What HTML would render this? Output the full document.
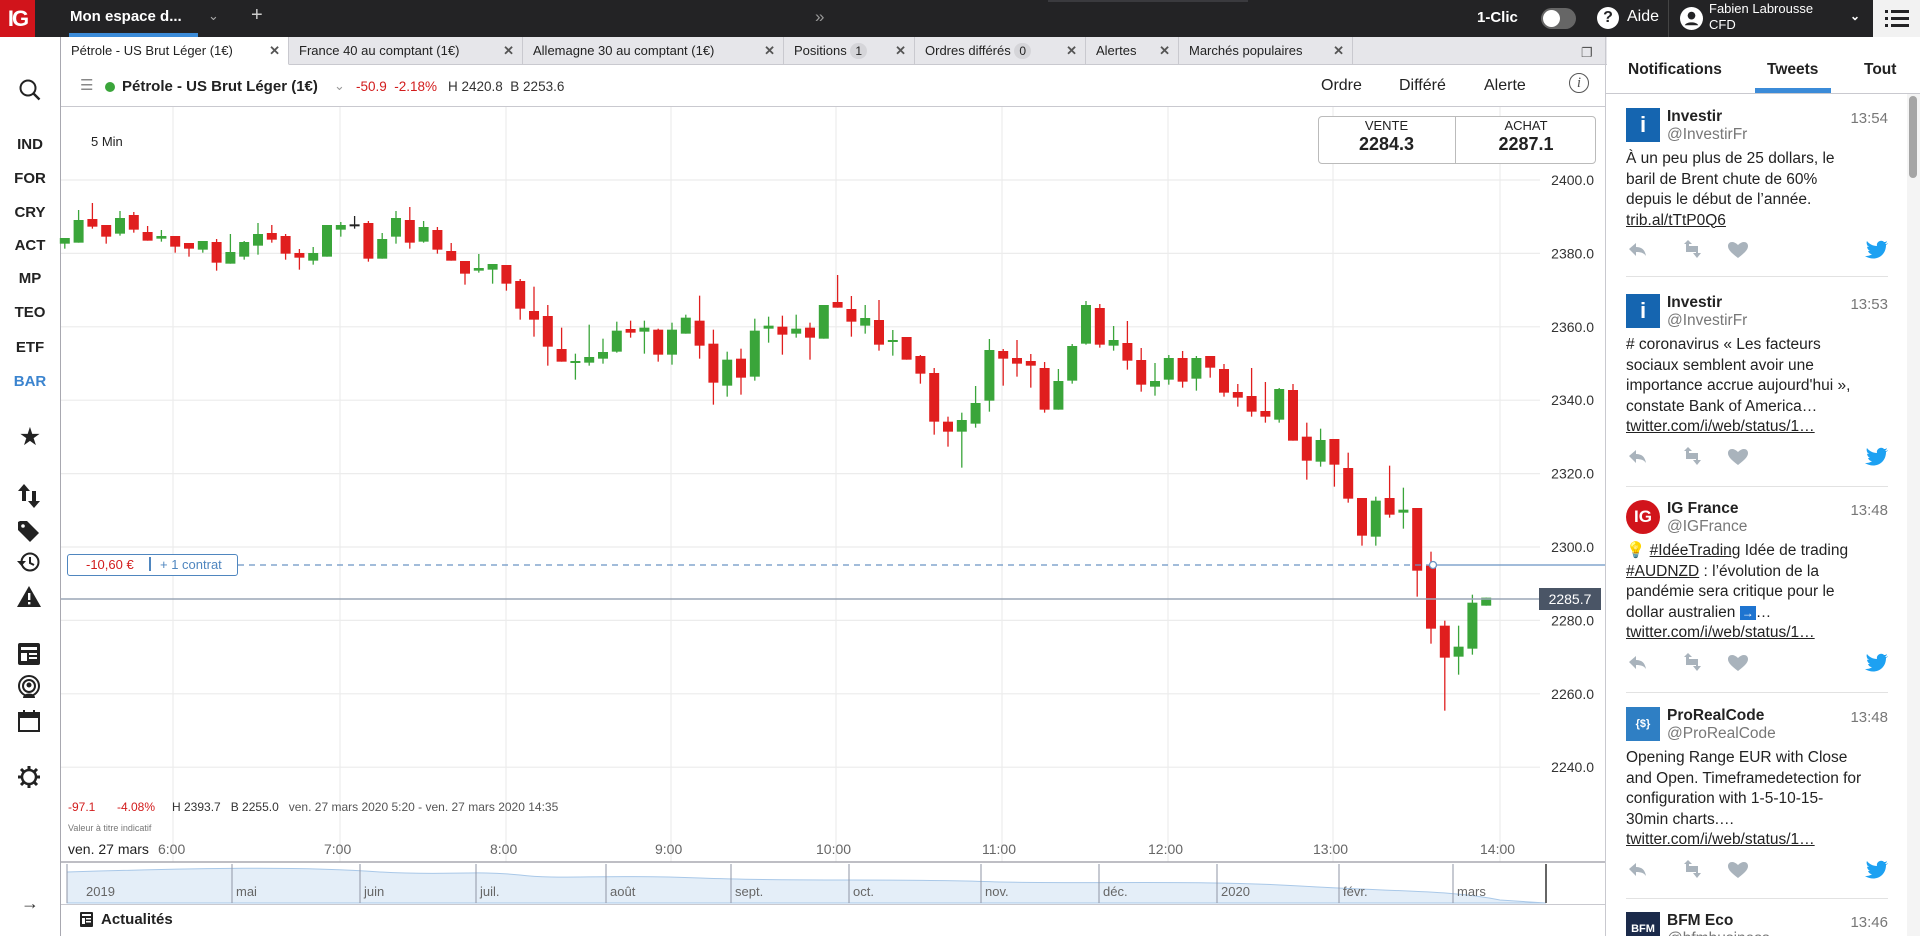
<!DOCTYPE html>
<html style="width:1920px;height:936px;overflow:hidden"><head><meta charset="utf-8">
<style>
*{box-sizing:border-box;margin:0;padding:0}
body{width:1920px;height:936px;overflow:hidden;background:#fff;font-family:"Liberation Sans",sans-serif;color:#222;position:relative}
.a{position:absolute;white-space:nowrap}
#top{left:0;top:0;width:1920px;height:37px;background:#232325}
.side{left:0;width:60px;text-align:center;font-weight:bold;font-size:15px;color:#222}
.tab{top:37px;height:28px;border-right:1px solid #c9c9cf;font-size:13px;line-height:28px;padding-left:10px;color:#222}
.tab .x{position:absolute;right:8px;top:0;font-weight:bold;color:#555}
.badge{display:inline-block;background:#d5d5d9;border-radius:9px;padding:0 5px;line-height:16px;font-size:12px}
.tw{left:20px;width:262px}
.tw .av{position:absolute;left:0;top:0;width:34px;height:34px}
.tw .nm{position:absolute;left:41px;top:0;font-weight:bold;font-size:15.5px}
.tw .hd{position:absolute;left:41px;top:18px;font-size:15.5px;color:#777}
.tw .tm{position:absolute;right:0;top:2px;font-size:15px;color:#777}
.tw .tx{position:absolute;left:0;top:41px;font-size:15.5px;line-height:20.5px;white-space:nowrap;color:#222}
.tw .tx u{text-decoration:underline}
.sep{left:20px;width:262px;height:1px;background:#e2e2e2}
.tl{font-size:14px;color:#666;top:841px}
.ml{font-size:13px;color:#666;top:884px}
</style></head><body>
<div id="top" class="a"></div>
<div class="a" style="left:0;top:0;width:35px;height:37px;background:#d1141b;color:#fff;font-weight:bold;font-size:22px;line-height:37px;text-align:center;letter-spacing:-2px">IG</div>
<div class="a" style="left:70px;top:8px;color:#fff;font-weight:bold;font-size:15px">Mon espace d...</div>
<div class="a" style="left:208px;top:8px;color:#aaa;font-size:13px">&#8964;</div>
<div class="a" style="left:251px;top:4px;color:#ccc;font-size:20px">+</div>
<div class="a" style="left:69px;top:33px;width:129px;height:4px;background:#3b8bd8"></div>
<div class="a" style="left:815px;top:7px;color:#999;font-size:17px">»</div>
<div class="a" style="left:1048px;top:0;width:200px;height:2px;background:#3a3a3e"></div>
<div class="a" style="left:1477px;top:9px;color:#fff;font-weight:bold;font-size:15px">1-Clic</div>
<div class="a" style="left:1541px;top:8px;width:35px;height:21px;border-radius:11px;background:#666"><div style="position:absolute;left:2px;top:2px;width:17px;height:17px;border-radius:50%;background:#fff"></div></div>
<div class="a" style="left:1597px;top:7px;width:22px;height:22px;border-radius:50%;background:#fff;color:#232325;font-weight:bold;font-size:16px;text-align:center;line-height:22px">?</div>
<div class="a" style="left:1627px;top:8px;color:#fff;font-size:16px">Aide</div>
<div class="a" style="left:1668px;top:0;width:1px;height:37px;background:#444"></div>
<svg class="a" style="left:1680px;top:7px" width="23" height="23" viewBox="0 0 24 24"><circle cx="12" cy="12" r="12" fill="#fff"/><circle cx="12" cy="9" r="4" fill="#232325"/><path d="M5 19c1.5-4 12.5-4 14 0" fill="#232325"/></svg>
<div class="a" style="left:1709px;top:1px;color:#fff;font-size:13px;line-height:16px">Fabien Labrousse<br>CFD</div>
<div class="a" style="left:1850px;top:9px;color:#fff;font-size:12px;font-weight:bold">&#8964;</div>
<div class="a" style="left:1873px;top:0;width:47px;height:37px;background:#f2f2f2"></div>
<svg class="a" style="left:1885px;top:9px" width="24" height="19"><g fill="#232325"><rect x="0" y="1" width="3" height="3"/><rect x="6" y="1" width="18" height="3"/><rect x="0" y="8" width="3" height="3"/><rect x="6" y="8" width="18" height="3"/><rect x="0" y="15" width="3" height="3"/><rect x="6" y="15" width="18" height="3"/></g></svg>

<div class="a" style="left:60px;top:37px;width:1px;height:899px;background:#a8a8b0"></div>
<svg class="a" style="left:18px;top:78px" width="24" height="24"><circle cx="10" cy="10" r="7.5" fill="none" stroke="#222" stroke-width="2"/><path d="M15.5 15.5l6 6" stroke="#222" stroke-width="2.4"/></svg>
<div class="a side" style="top:136px">IND</div>
<div class="a side" style="top:170px">FOR</div>
<div class="a side" style="top:204px">CRY</div>
<div class="a side" style="top:237px">ACT</div>
<div class="a side" style="top:270px">MP</div>
<div class="a side" style="top:304px">TEO</div>
<div class="a side" style="top:339px">ETF</div>
<div class="a side" style="top:373px;color:#3b84cf">BAR</div>
<div class="a" style="left:0;width:60px;top:422px;text-align:center;font-size:25px">★</div>
<svg class="a" style="left:18px;top:484px" width="22" height="24"><path d="M6 0l6 7H8v10H4V7H0z M16 24l-6-7h4V7h4v10h4z" fill="#222"/></svg>
<svg class="a" style="left:18px;top:520px" width="22" height="22"><path d="M0 2v8l12 12 9-9L9 1H2z" fill="#222"/><circle cx="5" cy="6" r="1.8" fill="#fff"/></svg>
<svg class="a" style="left:17px;top:551px" width="24" height="22"><circle cx="13" cy="11" r="8.5" fill="none" stroke="#222" stroke-width="2"/><path d="M13 6v6l4 2" stroke="#222" stroke-width="2" fill="none"/><path d="M0 10l4.5 5 4.5-5z" fill="#222"/></svg>
<svg class="a" style="left:17px;top:586px" width="24" height="21"><path d="M12 0l12 21H0z" fill="#222"/><rect x="11" y="7" width="2.4" height="7" fill="#fff"/><rect x="11" y="16" width="2.4" height="2.4" fill="#fff"/></svg>
<svg class="a" style="left:18px;top:643px" width="22" height="22"><rect x="0" y="0" width="22" height="22" rx="2" fill="#222"/><rect x="3" y="4" width="16" height="3" fill="#fff"/><rect x="3" y="10" width="6" height="8" fill="#fff"/><rect x="11" y="10" width="8" height="2" fill="#fff"/><rect x="11" y="14" width="8" height="2" fill="#fff"/></svg>
<svg class="a" style="left:17px;top:675px" width="24" height="24"><circle cx="12" cy="11" r="10" fill="none" stroke="#222" stroke-width="2"/><circle cx="12" cy="11" r="6" fill="none" stroke="#222" stroke-width="2"/><circle cx="12" cy="10" r="2.5" fill="#222"/><path d="M6 23c0-6 12-6 12 0z" fill="#222"/></svg>
<svg class="a" style="left:18px;top:710px" width="22" height="22"><rect x="1" y="3" width="20" height="18" fill="none" stroke="#222" stroke-width="2"/><rect x="1" y="3" width="20" height="5" fill="#222"/><rect x="5" y="0" width="2" height="5" fill="#222"/><rect x="15" y="0" width="2" height="5" fill="#222"/></svg>
<svg class="a" style="left:17px;top:765px" width="24" height="24"><circle cx="12" cy="12" r="7" fill="none" stroke="#222" stroke-width="2.5"/><g stroke="#222" stroke-width="3"><path d="M12 1v4M12 19v4M1 12h4M19 12h4M4 4l3 3M17 17l3 3M4 20l3-3M17 7l3-3"/></g><circle cx="12" cy="12" r="4.5" fill="#fff"/></svg>
<div class="a" style="left:0;width:60px;top:893px;text-align:center;font-size:18px;color:#333">&#8594;</div>

<div class="a" style="left:61px;top:37px;width:1546px;height:28px;background:#e6e6ea;border-bottom:1px solid #c9c9cf"></div>
<div class="a tab" style="left:61px;width:228px;background:#fff;border-bottom:1px solid #fff">Pétrole - US Brut Léger (1€)<span class="x">✕</span></div>
<div class="a tab" style="left:289px;width:234px">France 40 au comptant (1€)<span class="x">✕</span></div>
<div class="a tab" style="left:523px;width:261px">Allemagne 30 au comptant (1€)<span class="x">✕</span></div>
<div class="a tab" style="left:784px;width:131px">Positions <span class="badge">1</span><span class="x">✕</span></div>
<div class="a tab" style="left:915px;width:171px">Ordres différés <span class="badge">0</span><span class="x">✕</span></div>
<div class="a tab" style="left:1086px;width:93px">Alertes<span class="x">✕</span></div>
<div class="a tab" style="left:1179px;width:174px">Marchés populaires<span class="x">✕</span></div>
<div class="a" style="left:1581px;top:45px;font-size:13px;color:#555">❐</div>
<div class="a" style="left:1605px;top:37px;width:1px;height:899px;background:#c9c9cf"></div>

<div class="a" style="left:61px;top:106px;width:1544px;height:1px;background:#c9c9cf"></div>
<div class="a" style="left:80px;top:76px;font-size:15px;color:#888">☰</div>
<div class="a" style="left:105px;top:82px;width:10px;height:10px;border-radius:50%;background:#3aa53a"></div>
<div class="a" style="left:122px;top:78px;font-weight:bold;font-size:15px">Pétrole - US Brut Léger (1€)</div>
<div class="a" style="left:334px;top:78px;font-size:13px;color:#999">&#8964;</div>
<div class="a" style="left:356px;top:79px;font-size:13.5px;color:#d21c1c">-50.9&nbsp; -2.18%</div>
<div class="a" style="left:448px;top:79px;font-size:13.5px;color:#333">H 2420.8&nbsp; B 2253.6</div>
<div class="a" style="left:1321px;top:77px;font-size:16px">Ordre</div>
<div class="a" style="left:1399px;top:77px;font-size:16px">Différé</div>
<div class="a" style="left:1484px;top:77px;font-size:16px">Alerte</div>
<div class="a" style="left:1569px;top:73px;width:20px;height:20px;border-radius:50%;border:1.5px solid #555;text-align:center;font-family:'Liberation Serif',serif;font-style:italic;font-size:15px;line-height:18px;color:#555">i</div>

<svg class="a" id="ch" style="left:0;top:0" width="1920" height="936"></svg>

<div class="a" style="left:91px;top:134px;font-size:13px">5 Min</div>
<div class="a" style="left:1318px;top:116px;width:278px;height:48px;border:1px solid #bbb;border-radius:4px;background:#fff"></div>
<div class="a" style="left:1455px;top:116px;width:1px;height:48px;background:#bbb"></div>
<div class="a" style="left:1318px;top:118px;width:137px;text-align:center;font-size:13px;line-height:15px">VENTE<br><span style="font-size:18px;font-weight:bold;line-height:22px">2284.3</span></div>
<div class="a" style="left:1456px;top:118px;width:140px;text-align:center;font-size:13px;line-height:15px">ACHAT<br><span style="font-size:18px;font-weight:bold;line-height:22px">2287.1</span></div>

<div class="a" style="left:67px;top:554px;width:171px;height:22px;border:1.5px solid #4f86bf;border-radius:3px;background:#fff;font-size:13px;line-height:19px"><span style="position:absolute;left:18px;color:#d21c1c">-10,60 €</span><span style="position:absolute;left:81px;top:2px;width:1.5px;height:14px;background:#4f86bf"></span><span style="position:absolute;left:92px;color:#4f86bf">+ 1 contrat</span></div>
<div class="a" style="left:1539px;top:588px;width:62px;height:22px;background:#4a5566;color:#fff;font-size:14px;text-align:center;line-height:22px">2285.7</div>

<div class="a" style="left:68px;top:800px;font-size:12px;color:#d21c1c">-97.1</div>
<div class="a" style="left:117px;top:800px;font-size:12px;color:#d21c1c">-4.08%</div>
<div class="a" style="left:172px;top:800px;font-size:12px;color:#333">H 2393.7&nbsp;&nbsp; B 2255.0&nbsp;&nbsp; <span style="color:#555">ven. 27 mars 2020 5:20 - ven. 27 mars 2020 14:35</span></div>
<div class="a" style="left:68px;top:823px;font-size:9px;color:#777">Valeur à titre indicatif</div>

<div class="a tl" style="left:68px;color:#222">ven. 27 mars</div>
<div class="a tl" style="left:158px">6:00</div>
<div class="a tl" style="left:324px">7:00</div>
<div class="a tl" style="left:490px">8:00</div>
<div class="a tl" style="left:655px">9:00</div>
<div class="a tl" style="left:816px">10:00</div>
<div class="a tl" style="left:982px">11:00</div>
<div class="a tl" style="left:1148px">12:00</div>
<div class="a tl" style="left:1313px">13:00</div>
<div class="a tl" style="left:1480px">14:00</div>

<div class="a ml" style="left:86px">2019</div>
<div class="a ml" style="left:236px">mai</div>
<div class="a ml" style="left:364px">juin</div>
<div class="a ml" style="left:480px">juil.</div>
<div class="a ml" style="left:610px">août</div>
<div class="a ml" style="left:735px">sept.</div>
<div class="a ml" style="left:853px">oct.</div>
<div class="a ml" style="left:985px">nov.</div>
<div class="a ml" style="left:1103px">déc.</div>
<div class="a ml" style="left:1221px">2020</div>
<div class="a ml" style="left:1343px">févr.</div>
<div class="a ml" style="left:1457px">mars</div>

<div class="a" style="left:61px;top:904px;width:1544px;height:1px;background:#c9c9cf"></div>
<svg class="a" style="left:80px;top:912px" width="13" height="15"><rect width="13" height="15" rx="1" fill="#222"/><rect x="2" y="2" width="9" height="2" fill="#fff"/><rect x="2" y="6" width="3" height="6" fill="#fff"/><rect x="6" y="6" width="5" height="1.5" fill="#fff"/><rect x="6" y="9" width="5" height="1.5" fill="#fff"/></svg>
<div class="a" style="left:101px;top:911px;font-weight:bold;font-size:15px">Actualités</div>

<div class="a" style="left:1628px;top:61px;font-weight:bold;font-size:15.5px">Notifications</div>
<div class="a" style="left:1767px;top:61px;font-weight:bold;font-size:15.5px">Tweets</div>
<div class="a" style="left:1864px;top:61px;font-weight:bold;font-size:15.5px">Tout</div>
<div class="a" style="left:1755px;top:88px;width:76px;height:5px;background:#3b8bd8"></div>
<div class="a" style="left:1606px;top:93px;width:314px;height:1px;background:#c9c9cf"></div>
<div class="a" style="left:1907px;top:94px;width:13px;height:842px;background:#f4f4f4"></div>
<div class="a" style="left:1909px;top:96px;width:8px;height:82px;border-radius:4px;background:#a5a5a5"></div>

<div id="tweets" style="position:absolute;left:1606px;top:0;width:300px;height:936px;overflow:hidden"></div>

<script>
(function(){
var s='';
function L(x1,y1,x2,y2,c,w,d){s+='<line x1="'+x1+'" y1="'+y1+'" x2="'+x2+'" y2="'+y2+'" stroke="'+c+'" stroke-width="'+(w||1)+'"'+(d?' stroke-dasharray="'+d+'"':'')+'/>';}
for(var k=0;k<=8;k++){var y=180+73.4*k;L(61,y,1540,y,'#ececec',1.2);}
var hx=[173,340,506,671,836,1002,1168,1333,1500];
hx.forEach(function(x){L(x,107,x,862,'#ececec',1.2);});
for(k=0;k<=8;k++){var y=180+73.4*k;s+='<text x="1594" y="'+(y+5)+'" text-anchor="end" font-family="Liberation Sans" font-size="14" fill="#333">'+(2400-20*k)+'.0</text>';}
var D=[
['G',144,161,144,176],['G',90,158,60,158],['R',87,110,39,116],['R',105,140,105,161],['G',84,131,63,137],['R',75,119,66,128],['R',126,152,108,152],['G',138,146,120,155],['R',138,170,138,188],['R',159,176,159,200],
['G',153,179,153,188],['R',156,218,147,242],['G',186,221,132,221],['G',156,200,153,209],['G',132,167,99,194],['R',129,149,105,158],['R',138,191,132,209],['R',189,203,177,239],['G',189,212,171,224],['G',105,200,105,200],
['G',105,119,96,140],['K',103,105,78,116],['R',99,206,93,215],['G',147,206,129,206],['G',84,140,63,161],['R',90,158,51,176],['G',111,155,93,158],['R',120,179,111,191],['R',183,212,159,212],['R',213,251,213,284],
['G',234,242,192,248],['G',222,239,222,281],['R',225,281,225,302],['R',273,356,267,389],['R',363,389,290,440],['R',378,470,345,527],['R',477,515,413,515],['G',513,518,491,569],['G',501,518,404,527],['G',486,506,446,521],
['G',422,485,395,488],['R',417,428,392,443],['G',413,425,392,491],['R',419,494,416,515],['G',419,494,398,524],['G',383,431,374,431],['R',392,467,317,506],['R',461,578,419,644],['G',509,587,485,620],['R',506,563,476,614],
['G',422,560,386,572],['G',407,416,380,458],['R',410,434,377,494],['G',416,431,374,443],['R',413,443,398,509],
['G',75,176,75,176],['R',66,83,-15,83],['R',87,125,48,170],['G',114,137,75,161],['R',120,194,60,212],['G',180,185,150,227],['R',171,239,171,239],['R',228,281,225,311],['R',279,425,264,464],['R',425,455,410,500],
['G',420,455,398,563],['G',369,431,318,443],['G',210,362,177,395],['R',213,236,207,317],['R',234,251,180,290],['R',243,257,222,323],['R',264,389,246,398],['G',303,389,267,389],['G',198,302,192,311],['G',75,191,63,194],
['R',84,194,72,203],['G',180,197,138,212],['R',189,242,123,269],['R',240,314,204,335],['G',303,320,249,347],['G',234,299,225,314],['R',234,305,213,323],['G',234,296,228,332],['R',228,263,228,293],['R',267,338,252,350],
['R',336,353,312,380],['R',348,395,264,410],['R',393,410,306,428],['G',327,419,324,428],['R',330,482,312,482],['R',470,542,428,599],['G',480,545,446,560],['R',477,554,477,620],['R',564,656,518,668],['R',654,767,654,797],
['G',662,770,650,797],['R',654,704,557,713],['G',689,698,623,746],['R',684,872,684,950],['R',857,1046,815,1091],['R',1037,1133,1022,1292],['G',1100,1130,1037,1184],['G',968,1106,944,1124],['G',953,977,953,977]];
var col={G:'#3aa53a',R:'#e01e1e',K:'#222'};
D.forEach(function(d,i){var off=i<55?190:280;var x=64.8+i*13.8;var c=col[d[0]];
var bt=off+d[1]/3,bb=off+d[2]/3,wt=off+d[3]/3,wb=off+d[4]/3;
L(x,wt,x,wb,c,1.3);
var h=Math.max(bb-bt,2);
s+='<rect x="'+(x-5)+'" y="'+bt+'" width="10" height="'+h+'" fill="'+c+'"/>';});
L(238,565,1433,565,'#6b94c4',1.3,'6,5');
L(1433,565,1605,565,'#6b94c4',1.3);
s+='<circle cx="1433" cy="565" r="3.5" fill="#fff" stroke="#6b94c4" stroke-width="1.3"/>';
L(61,599,1539,599,'#9aa6b6',1.6);
L(61,862,1605,862,'#a8a8b0',1.5);
s+='<path d="M67 903 L67 872 C200 868 300 866 380 872 C450 876 470 870 520 875 C560 880 600 874 700 878 C800 882 900 878 1000 882 C1100 884 1200 880 1300 886 C1400 892 1450 890 1500 900 L1546 903 Z" fill="#e4eef8" stroke="#a9c8e8" stroke-width="1"/>';
[67,232,360,476,606,731,849,981,1099,1217,1339,1453].forEach(function(x){L(x,864,x,903,'#8f95a6',1);});
L(1546,864,1546,903,'#666',2);
s+='<rect x="1547" y="864" width="58" height="40" fill="#fff"/>';
document.getElementById('ch').innerHTML=s;

var T=[
[108,'#1565b0','i','Investir','@InvestirFr','13:54',['À un peu plus de 25 dollars, le','baril de Brent chute de 60%','depuis le début de l’année.','<u>trib.al/tTtP0Q6</u>']],
[294,'#1565b0','i','Investir','@InvestirFr','13:53',['# coronavirus « Les facteurs','sociaux semblent avoir une','importance accrue aujourd\'hui »,','constate Bank of America…','<u>twitter.com/i/web/status/1…</u>']],
[500,'#d1141b','IG','IG France','@IGFrance','13:48',['💡 <u>#IdéeTrading</u> Idée de trading','<u>#AUDNZD</u> : l’évolution de la','pandémie sera critique pour le','dollar australien <span style="background:#1e74d0;color:#fff;font-size:12px;padding:0 2px">→</span>…','<u>twitter.com/i/web/status/1…</u>']],
[707,'#2f7fc4','{$}','ProRealCode','@ProRealCode','13:48',['Opening Range EUR with Close','and Open. Timeframedetection for','configuration with 1-5-10-15-','30min charts.…','<u>twitter.com/i/web/status/1…</u>']],
[912,'#1b2a4a','BFM','BFM Eco','@bfmbusiness','13:46',[]]];
var h='';
T.forEach(function(t,i){
 h+='<div class="a tw" style="top:'+t[0]+'px;height:'+(i==4?24:190)+'px;overflow:'+(i==4?'hidden':'visible')+'">';
 var r=t[2]=='IG'?'border-radius:50%;':'';
 h+='<div class="av" style="background:'+t[1]+';'+r+'color:#fff;font-weight:bold;font-size:'+(t[2]=='i'?22:(t[2]=='IG'?17:11))+'px;text-align:center;line-height:34px">'+t[2]+'</div>';
 h+='<div class="nm">'+t[3]+'</div><div class="hd">'+t[4]+'</div><div class="tm">'+t[5]+'</div>';
 if(t[6].length){h+='<div class="tx">'+t[6].join('<br>')+'</div>';var ay=41+t[6].length*20.5+9;
 h+='<svg style="position:absolute;left:0;top:'+ay+'px" width="262" height="22">'+
 '<path d="M3 9l7-6v4c6 0 9 3 10 9-2-3-5-4-10-4v4z" fill="#a9b3bc"/>'+
 '<path d="M62 6h10v7h3l-4 5-4-5h3V9h-8zM58 4l4-4 4 4h-3v5h8v3H60V4z" fill="#a9b3bc"/>'+
 '<path d="M112 18c-8-6-10-9-10-12 0-4 5-6 10-1 5-5 10-3 10 1 0 3-2 6-10 12z" fill="#a9b3bc"/>'+
 '<path d="M262 3c-1 1-2 1-3 1 1-1 2-2 2-3-1 1-2 1-3 1-3-3-8 0-7 4-4 0-8-2-10-5-1 2 0 5 2 6-1 0-2 0-2-1 0 2 1 4 3 5h-2c1 2 2 3 4 3-2 2-5 2-7 2 9 6 21 1 21-11 1-1 2-1 2-2z" fill="#1da1f2"/></svg>';}
 h+='</div>';
});
[276,486,692,898].forEach(function(y){h+='<div class="a sep" style="top:'+y+'px"></div>';});
document.getElementById('tweets').innerHTML=h;
})();
</script>
</body></html>
